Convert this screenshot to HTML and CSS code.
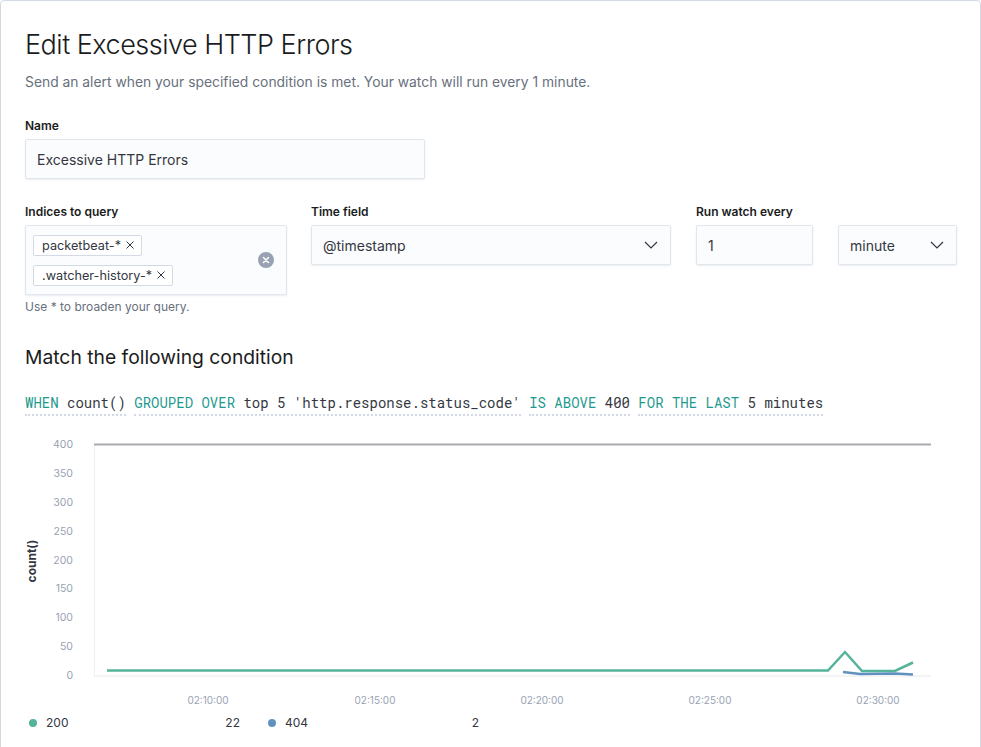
FILE: index.html
```html
<!DOCTYPE html>
<html>
<head>
<meta charset="utf-8">
<link rel="stylesheet" href="styles.css">
</head>
<body>
<div class="panel">
  <h1 class="title">Edit Excessive HTTP Errors</h1>
  <p class="subtitle">Send an alert when your specified condition is met. Your watch will run every 1 minute.</p>

  <div class="field">
    <label class="label">Name</label>
    <div class="control name-input">Excessive HTTP Errors</div>
  </div>

  <div class="row">
    <div class="field col-indices">
      <label class="label">Indices to query</label>
      <div class="control combo">
        <div class="pills">
          <span class="pill">packetbeat-* <svg class="pill-x" width="8" height="8" viewBox="0 0 8 8"><path d="M0.5 0.5 L7.5 7.5 M7.5 0.5 L0.5 7.5" stroke="#343741" stroke-width="1"/></svg></span>
          <span class="pill">.watcher-history-* <svg class="pill-x" width="8" height="8" viewBox="0 0 8 8"><path d="M0.5 0.5 L7.5 7.5 M7.5 0.5 L0.5 7.5" stroke="#343741" stroke-width="1"/></svg></span>
        </div>
        <span class="clear">
          <svg width="16" height="16" viewBox="0 0 16 16"><circle cx="8" cy="8" r="8" fill="#98a2b3"/><path d="M5.5 5.5 L10.5 10.5 M10.5 5.5 L5.5 10.5" stroke="#fff" stroke-width="1.5" stroke-linecap="round"/></svg>
        </span>
      </div>
      <div class="help">Use * to broaden your query.</div>
    </div>
    <div class="field col-time">
      <label class="label">Time field</label>
      <div class="control select">
        <span>@timestamp</span>
        <svg class="chev" width="14" height="8" viewBox="0 0 14 8"><path d="M1 1 L7 7 L13 1" fill="none" stroke="#343741" stroke-width="1.2"/></svg>
      </div>
    </div>
    <div class="field col-every">
      <label class="label">Run watch every</label>
      <div class="control">1</div>
    </div>
    <div class="field col-unit">
      <label class="label">&nbsp;</label>
      <div class="control select">
        <span>minute</span>
        <svg class="chev" width="14" height="8" viewBox="0 0 14 8"><path d="M1 1 L7 7 L13 1" fill="none" stroke="#343741" stroke-width="1.2"/></svg>
      </div>
    </div>
  </div>

  <h2 class="section-title">Match the following condition</h2>

  <div class="expression">
    <span class="expr"><span class="kw">WHEN</span> count()</span>
    <span class="expr"><span class="kw">GROUPED OVER</span> top 5 'http.response.status_code'</span>
    <span class="expr"><span class="kw">IS ABOVE</span> 400</span>
    <span class="expr"><span class="kw">FOR THE LAST</span> 5 minutes</span>
  </div>

  <svg class="chart" width="932" height="282" viewBox="25 430 932 282">
    <g class="yticks" text-anchor="end">
      <text x="73" y="448">400</text>
      <text x="73" y="477">350</text>
      <text x="73" y="506">300</text>
      <text x="73" y="535">250</text>
      <text x="73" y="564">200</text>
      <text x="73" y="592">150</text>
      <text x="73" y="621">100</text>
      <text x="73" y="650">50</text>
      <text x="73" y="679">0</text>
    </g>
    <text class="ytitle" transform="translate(35.5 561) rotate(-90)" text-anchor="middle">count()</text>
    <line x1="94.5" y1="444" x2="94.5" y2="676" stroke="#eef0f3" stroke-width="1"/>
    <line x1="94" y1="676" x2="931" y2="676" stroke="#eef0f3" stroke-width="1.5"/>
    <line x1="94" y1="444.5" x2="931" y2="444.5" stroke="#a7a9ac" stroke-width="2"/>
    <path d="M107 670.5 L828 670.5 L845 652 L862 671 L895 671 L913 662.5" fill="none" stroke="#54b399" stroke-width="2.5" stroke-linejoin="miter"/>
    <path d="M843 672 L860 674 L895 673.5 L913 674.5" fill="none" stroke="#6092c0" stroke-width="2.5"/>
    <g class="xticks" text-anchor="middle">
      <text x="208" y="704">02:10:00</text>
      <text x="375" y="704">02:15:00</text>
      <text x="542" y="704">02:20:00</text>
      <text x="710" y="704">02:25:00</text>
      <text x="878" y="704">02:30:00</text>
    </g>
  </svg>

  <div class="legend">
    <div class="legend-item"><span class="dot green"></span><span class="lg-label">200</span><span class="lg-value">22</span></div>
    <div class="legend-item"><span class="dot blue"></span><span class="lg-label">404</span><span class="lg-value">2</span></div>
  </div>
</div>
</body>
</html>
```

FILE: styles.css
```css
html, body {
  margin: 0;
  padding: 0;
  background: #ffffff;
}
body {
  font-family: Inter, "Noto Sans", sans-serif;
  color: #343741;
}
.panel {
  width: 955px;
  min-height: 760px;
  border: 1px solid #d3dae6;
  border-radius: 4px;
  padding: 26px 0 0 24px;
  box-sizing: content-box;
  overflow: hidden;
}
.title {
  margin: 0;
  font-size: 27px;
  line-height: 36px;
  font-weight: 300;
  color: #1a1c21;
  letter-spacing: -0.5px;
}
.subtitle {
  margin: 9px 0 0;
  font-size: 13.85px;
  line-height: 20px;
  color: #69707d;
}
.field {
  display: flex;
  flex-direction: column;
}
.panel > .field {
  margin-top: 25px;
}
.label {
  font-size: 12px;
  line-height: 18px;
  font-weight: 600;
  color: #1a1c21;
  margin-bottom: 4px;
}
.control {
  box-sizing: border-box;
  height: 40px;
  background: #fbfcfd;
  border: 1px solid #e1e5ec;
  box-shadow: 0 1px 2px rgba(152, 162, 179, 0.2);
  border-radius: 2px;
  padding: 0 11px;
  display: flex;
  align-items: center;
  font-size: 14px;
  color: #343741;
}
.name-input {
  width: 400px;
}
.row {
  display: flex;
  margin-top: 24px;
}
.col-indices { width: 262px; margin-right: 24px; }
.col-time { width: 360px; margin-right: 25px; }
.col-every { width: 117px; margin-right: 25px; }
.col-unit { width: 119px; }
.combo {
  height: 70px;
  padding: 0 12px 0 7px;
  justify-content: space-between;
}
.pills {
  display: flex;
  flex-direction: column;
  align-items: flex-start;
  gap: 9px;
}
.pill {
  box-sizing: border-box;
  height: 21px;
  display: inline-flex;
  align-items: center;
  background: #fff;
  border: 1px solid #d3dae6;
  border-radius: 2px;
  padding: 0 7px 0 8px;
  font-size: 12.7px;
  color: #343741;
}
.pill-x {
  margin-left: 5px;
  display: block;
}
.clear {
  display: flex;
}
.help {
  margin-top: 4px;
  font-size: 12px;
  line-height: 16px;
  color: #69707d;
}
.select {
  justify-content: space-between;
  padding-right: 12px;
}
.chev {
  display: block;
}
.section-title {
  margin: 28px 0 0;
  font-size: 19.3px;
  line-height: 28px;
  font-weight: 400;
  color: #1a1c21;
}
.expression {
  margin-top: 22px;
  font-family: "Roboto Mono", "DejaVu Sans Mono", monospace;
  font-size: 14px;
  line-height: 20px;
  color: #343741;
  white-space: nowrap;
}
.expr {
  display: inline-block;
  padding-bottom: 1px;
  border-bottom: 2px dotted #d3dae6;
}
.kw {
  color: #1d9a8e;
}
.chart {
  display: block;
  margin-top: 14px;
  font-family: Inter, "Noto Sans", sans-serif;
}
.yticks text {
  font-size: 10.5px;
  fill: #98a2b3;
}
.xticks text {
  font-size: 10px;
  fill: #98a2b3;
}
.ytitle {
  font-size: 12px;
  font-weight: 700;
  fill: #343741;
}
.legend {
  display: flex;
  gap: 28px;
  padding-left: 4px;
  margin-top: 3px;
}
.legend-item {
  width: 211px;
  display: flex;
  align-items: center;
  font-size: 12px;
  line-height: 16px;
  color: #343741;
}
.dot {
  width: 8px;
  height: 8px;
  border-radius: 50%;
  margin-right: 9px;
}
.dot.green { background: #54b399; }
.dot.blue { background: #6092c0; }
.lg-label { flex: 1; }
.lg-value { text-align: right; }
```
